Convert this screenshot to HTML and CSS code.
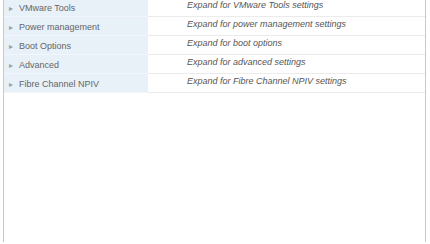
FILE: index.html
```html
<!DOCTYPE html>
<html>
<head>
    <link rel="stylesheet" href="styles.css">
</head>
<body>
    <div class="panel">
        <table class="settings">
            <tr>
                <td class="label"><span class="caret">&#9656;</span>VMware Tools</td>
                <td class="desc">Expand for VMware Tools settings</td>
            </tr>
            <tr>
                <td class="label"><span class="caret">&#9656;</span>Power management</td>
                <td class="desc">Expand for power management settings</td>
            </tr>
            <tr>
                <td class="label"><span class="caret">&#9656;</span>Boot Options</td>
                <td class="desc">Expand for boot options</td>
            </tr>
            <tr>
                <td class="label"><span class="caret">&#9656;</span>Advanced</td>
                <td class="desc">Expand for advanced settings</td>
            </tr>
            <tr>
                <td class="label"><span class="caret">&#9656;</span>Fibre Channel NPIV</td>
                <td class="desc">Expand for Fibre Channel NPIV settings</td>
            </tr>
        </table>
    </div>
</body>
</html>
```

FILE: styles.css
```css
html, body {
    margin: 0;
    height: 100%;
    overflow: hidden;
    background: #fff;
}

.panel {
    margin-left: 3px;
    width: 421px;
    height: 100%;
    border-left: 1px solid #c9c9c9;
    border-right: 1px solid #c9c9c9;
    font-family: "Liberation Sans", Arial, sans-serif;
    font-size: 9px;
    line-height: 11px;
}

.settings {
    width: 100%;
    margin-top: -2px;
    border-collapse: collapse;
}

.settings td {
    padding: 0;
    border-bottom: 1px solid #ebebeb;
    vertical-align: top;
}

.settings td.label {
    width: 144px;
    height: 13px;
    padding-top: 5px;
    background: #e8f0f8;
    color: #666;
    border-bottom-color: #f2f6fa;
}

.caret {
    display: inline-block;
    width: 10px;
    padding-left: 5px;
    font-size: 8px;
    color: #a0a0a0;
}

.settings td.desc {
    height: 16px;
    padding-top: 2px;
    padding-left: 39px;
    color: #555;
    font-style: italic;
}
```
